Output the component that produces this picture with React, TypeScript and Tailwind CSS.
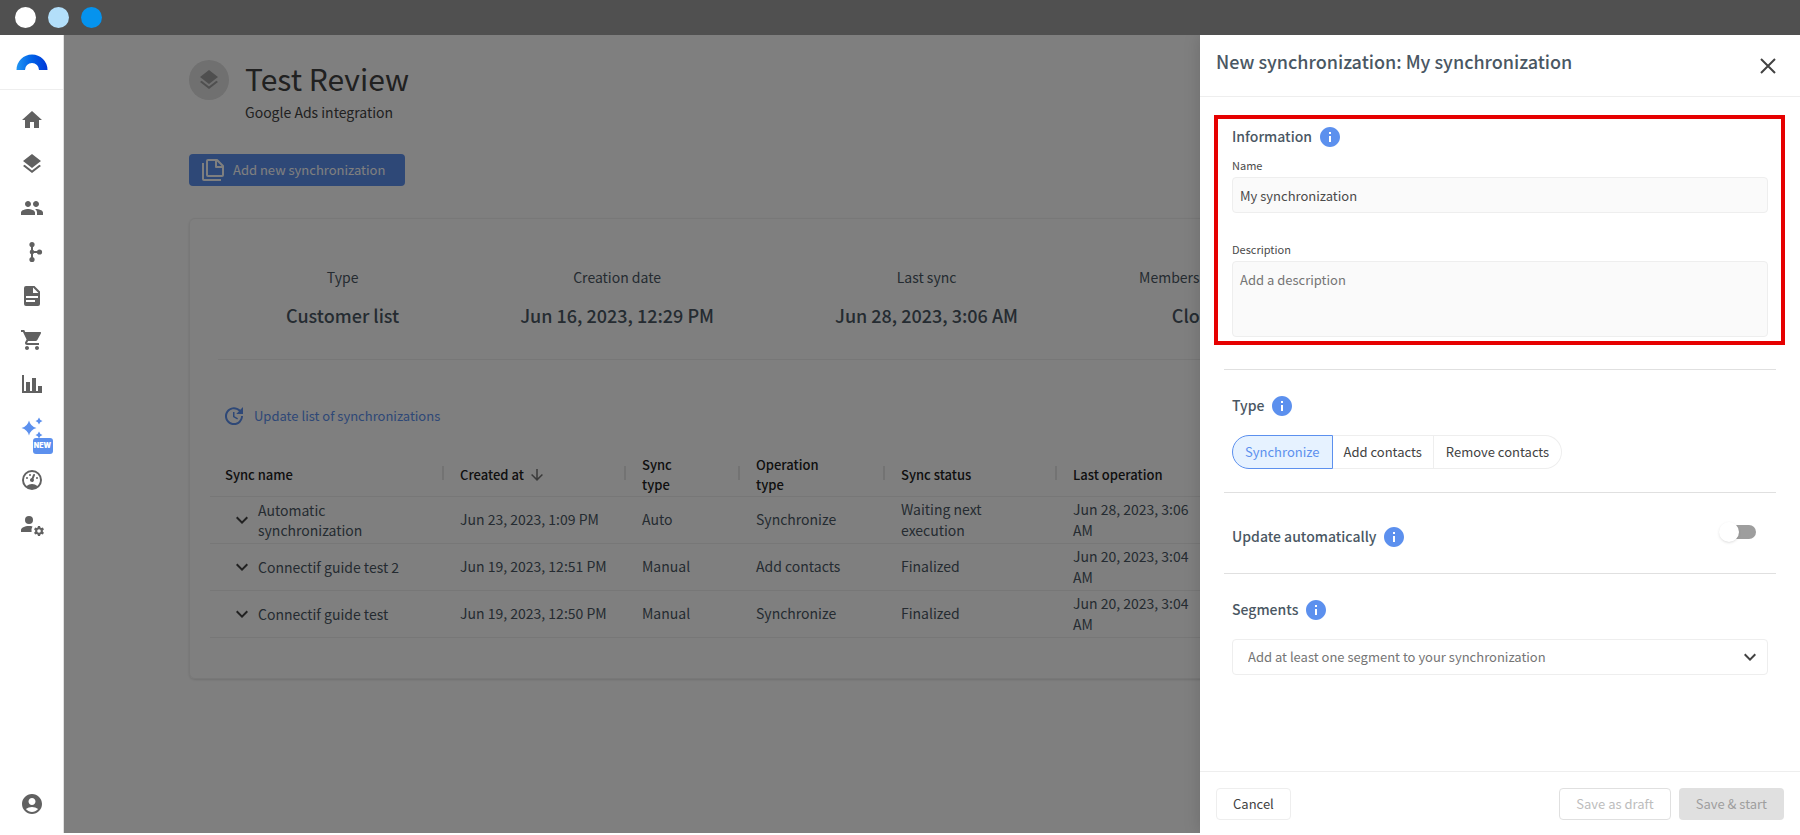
import React from "react";
import {
  MdAccountCircle,
  MdHome,
  MdInfo,
  MdLayers,
  MdPeople,
  MdShoppingCart,
  MdUpdate,
} from "react-icons/md";

type IconProps = { className?: string };

const BranchIcon = ({ className }: IconProps) => (
  <svg viewBox="0 0 24 24" className={className} fill="currentColor">
    <circle cx="12" cy="4.5" r="2.6" />
    <circle cx="12" cy="19.5" r="2.6" />
    <circle cx="19.5" cy="12" r="2.6" />
    <circle cx="12" cy="12" r="2.3" />
    <path d="M11 4h2v7h6v2h-6v7h-2z" />
  </svg>
);

const DocumentIcon = ({ className }: IconProps) => (
  <svg viewBox="0 0 24 24" className={className} fill="currentColor">
    <path
      fillRule="evenodd"
      d="M6 2h8.5L20 7.5V20a2 2 0 0 1-2 2H6a2 2 0 0 1-2-2V4a2 2 0 0 1 2-2zm7 1.5V9h5.5zM6 12v2h12v-2zm0 4v2h9v-2z"
    />
  </svg>
);

const ChartIcon = ({ className }: IconProps) => (
  <svg viewBox="0 0 24 24" className={className} fill="currentColor">
    <path d="M22 21H2V3h2v16h2v-9h4v9h2V6h4v13h2v-5h4z" />
  </svg>
);

const SparklesIcon = ({ className }: IconProps) => (
  <svg viewBox="0 0 24 24" className={className} fill="currentColor">
    <path d="M9 4.500q1.500 6 7.500 7.500q-6 1.500-7.500 7.500q-1.500-6-7.500-7.500q6-1.500 7.500-7.500z" />
    <path d="M19 1.500q.8 2.700 3.500 3.500q-2.700.8-3.500 3.500q-.8-2.700-3.500-3.500q2.700-.8 3.500-3.500z" />
    <path d="M19 15.500q.8 2.700 3.500 3.500q-2.700.8-3.500 3.500q-.8-2.700-3.500-3.500q2.700-.8 3.500-3.500z" />
  </svg>
);

const GaugeIcon = ({ className }: IconProps) => (
  <svg viewBox="0 0 24 24" className={className} fill="currentColor">
    <path d="M12 2A10 10 0 0 0 2 12A10 10 0 0 0 12 22A10 10 0 0 0 22 12A10 10 0 0 0 12 2M12 4A8 8 0 0 1 20 12C20 14.4 19 16.5 17.3 18C15.9 16.7 14 16 12 16C10 16 8.2 16.7 6.7 18C5 16.5 4 14.4 4 12A8 8 0 0 1 12 4M14 5.890C13.62 5.900 13.26 6.150 13.1 6.540L11.810 9.770L11.710 10C11 10.130 10.410 10.600 10.140 11.260C9.730 12.290 10.230 13.450 11.260 13.860C12.290 14.270 13.450 13.770 13.860 12.740C14.120 12.080 14 11.320 13.570 10.760L13.670 10.500L14.960 7.290C15.170 6.750 14.920 6.170 14.410 5.960C14.280 5.910 14.150 5.890 14 5.890M10 6A1 1 0 0 0 9 7A1 1 0 0 0 10 8A1 1 0 0 0 11 7A1 1 0 0 0 10 6M7 9A1 1 0 0 0 6 10A1 1 0 0 0 7 11A1 1 0 0 0 8 10A1 1 0 0 0 7 9M17 9A1 1 0 0 0 16 10A1 1 0 0 0 17 11A1 1 0 0 0 18 10A1 1 0 0 0 17 9Z" />
  </svg>
);

const AccountCogIcon = ({ className }: IconProps) => (
  <svg viewBox="0 0 24 24" className={className} fill="currentColor">
    <circle cx="9" cy="8" r="4" />
    <path d="M9 14c-4.420 0-8 1.790-8 4v2h10.600a7 7 0 0 1 .9-5.600C11.400 14.100 10.200 14 9 14z" />
    <path
      fillRule="evenodd"
      d="M18 14h2l.4 1.500 1 .6 1.500-.5 1 1.800-1.100 1.100v1.100l1.100 1.100-1 1.800-1.500-.5-1 .6-.4 1.400h-2l-.4-1.400-1-.6-1.500.5-1-1.800 1.100-1.100v-1.100l-1.100-1.100 1-1.800 1.500.5 1-.6zm1 3.200a1.800 1.800 0 1 0 0 3.600a1.800 1.800 0 1 0 0-3.600z"
    />
  </svg>
);

const CopyIcon = ({ className }: IconProps) => (
  <svg
    viewBox="0 0 24 24"
    className={className}
    fill="none"
    stroke="currentColor"
    strokeWidth="2"
    strokeLinejoin="round"
  >
    <path d="M7 2h9l6 6v9a1 1 0 0 1-1 1H7a1 1 0 0 1-1-1V3a1 1 0 0 1 1-1z" />
    <path d="M15 2v7h7" />
    <path d="M2 5v16a1 1 0 0 0 1 1h17" />
  </svg>
);

const ChevronIcon = ({ className }: IconProps) => (
  <svg viewBox="0 0 24 24" className={className} fill="currentColor">
    <path d="M7.410 8.580L12 13.170L16.590 8.580L18 10L12 16L6 10z" />
  </svg>
);

const ArrowDownIcon = ({ className }: IconProps) => (
  <svg viewBox="0 0 24 24" className={className} fill="currentColor">
    <path d="M11 4h2v12l5.500-5.500 1.420 1.420L12 19.840 4.080 11.920 5.500 10.500 11 16z" />
  </svg>
);

const CloseIcon = ({ className }: IconProps) => (
  <svg
    viewBox="0 0 24 24"
    className={className}
    fill="none"
    stroke="currentColor"
    strokeWidth="2"
  >
    <path d="M5 5l14 14M19 5L5 19" />
  </svg>
);

const Logo = () => (
  <svg viewBox="0 0 32 16" className="h-4 w-8">
    <defs>
      <linearGradient id="logo" x1="0" x2="1">
        <stop offset="0" stopColor="#2196f3" />
        <stop offset="0.5" stopColor="#0060e6" />
        <stop offset="1" stopColor="#0038d8" />
      </linearGradient>
    </defs>
    <path
      d="M.5 16a15.500 15.500 0 0 1 31 0h-8.500a7 7 0 0 0-14 0z"
      fill="url(#logo)"
    />
  </svg>
);

const navItems = [
  { label: "Home", icon: MdHome },
  { label: "Content", icon: MdLayers },
  { label: "Contacts", icon: MdPeople },
  { label: "Workflows", icon: BranchIcon },
  { label: "Documents", icon: DocumentIcon },
  { label: "Store", icon: MdShoppingCart },
  { label: "Reports", icon: ChartIcon },
];

const stats = [
  { label: "Type", value: "Customer list" },
  { label: "Creation date", value: "Jun 16, 2023, 12:29 PM" },
  { label: "Last sync", value: "Jun 28, 2023, 3:06 AM" },
  { label: "Membership status", value: "Closed" },
];

const columns = [
  "Sync name",
  "Created at",
  "Sync type",
  "Operation type",
  "Sync status",
  "Last operation",
];

const syncs = [
  {
    name: "Automatic synchronization",
    created: "Jun 23, 2023, 1:09 PM",
    type: "Auto",
    operation: "Synchronize",
    status: "Waiting next execution",
    last: "Jun 28, 2023, 3:06 AM",
  },
  {
    name: "Connectif guide test 2",
    created: "Jun 19, 2023, 12:51 PM",
    type: "Manual",
    operation: "Add contacts",
    status: "Finalized",
    last: "Jun 20, 2023, 3:04 AM",
  },
  {
    name: "Connectif guide test",
    created: "Jun 19, 2023, 12:50 PM",
    type: "Manual",
    operation: "Synchronize",
    status: "Finalized",
    last: "Jun 20, 2023, 3:04 AM",
  },
];

const Sidebar = () => (
  <nav className="flex w-16 shrink-0 flex-col items-center border-r border-[#e0e0e0] bg-white text-[#616161]">
    <a
      href="#"
      aria-label="Dashboard"
      className="flex h-[55px] w-full items-center justify-center border-b border-[#eeeeee]"
    >
      <Logo />
    </a>
    <div className="flex flex-col items-center gap-5 pt-[18px]">
      {navItems.map((item) => (
        <a key={item.label} href="#" aria-label={item.label}>
          <item.icon className="size-6" />
        </a>
      ))}
      <a href="#" aria-label="AI" className="relative text-[#5c90ee]">
        <SparklesIcon className="size-6" />
        <span className="absolute top-[22px] left-[13px] flex h-4 w-5 items-center justify-center rounded-[3px] bg-[#5c90ee] font-[Inter] text-[7px] font-black text-white">
          NEW
        </span>
      </a>
      <a href="#" aria-label="Performance" className="pt-2">
        <GaugeIcon className="size-6" />
      </a>
      <a href="#" aria-label="Account settings">
        <AccountCogIcon className="size-6" />
      </a>
    </div>
    <a href="#" aria-label="Profile" className="mt-auto pb-[17px]">
      <MdAccountCircle className="size-6" />
    </a>
  </nav>
);

const SyncTable = () => (
  <table className="w-full table-fixed border-collapse text-left">
    <colgroup>
      <col className="w-[235px]" />
      <col className="w-[182px]" />
      <col className="w-[114px]" />
      <col className="w-[145px]" />
      <col className="w-[172px]" />
      <col className="w-[160px]" />
      <col />
    </colgroup>
    <thead>
      <tr className="h-[47px] border-b border-[#eeeeee] text-[13px] leading-5 text-[#212121]">
        {columns.map((column) => (
          <th key={column} className="pt-[6px] pr-0 pb-0 pl-[15px] font-medium">
            <div className="flex items-center justify-between">
              <span className="flex items-center pr-10">
                {column}
                {column === "Created at" && (
                  <ArrowDownIcon className="ml-1 size-[18px] text-[#757575]" />
                )}
              </span>
              {column !== "Last operation" && (
                <span className="mr-px mb-1 h-[14px] w-[2px] shrink-0 bg-[#e6e6e6]" />
              )}
            </div>
          </th>
        ))}
        <td />
      </tr>
    </thead>
    <tbody className="text-[14px] leading-[21px] text-[#4a5763]">
      {syncs.map((sync) => (
        <tr key={sync.name} className="h-[47px] border-b border-[#eeeeee]">
          <td className="py-0 pr-6 pl-5">
            <div className="flex items-center gap-1 leading-5">
              <button aria-label="Expand row" className="text-[#424242]">
                <ChevronIcon className="size-6" />
              </button>
              <span>{sync.name}</span>
            </div>
          </td>
          <td className="p-0 pl-[15px]">{sync.created}</td>
          <td className="p-0 pl-[15px]">{sync.type}</td>
          <td className="p-0 pl-[15px]">{sync.operation}</td>
          <td className="px-[15px] py-0">{sync.status}</td>
          <td className="px-[15px] py-0">{sync.last}</td>
          <td />
        </tr>
      ))}
    </tbody>
  </table>
);

const Integration = () => (
  <div className="px-[125px] pt-[25px]">
    <div className="flex gap-4">
      <div className="flex size-10 shrink-0 items-center justify-center rounded-full bg-[#e0e0e0] text-[#9e9e9e]">
        <MdLayers className="size-6" />
      </div>
      <div className="text-[#424242]">
        <h1 className="text-[30px] leading-9">Test Review</h1>
        <p className="mt-[6px] text-[14px] leading-5">Google Ads integration</p>
      </div>
    </div>

    <button className="mt-8 flex h-8 items-center gap-2 rounded-[4px] bg-[#5c90ee] pr-5 pl-3 text-[13px] text-white">
      <CopyIcon className="size-6" />
      Add new synchronization
    </button>

    <section className="mt-8 rounded-[6px] border border-[#f0f0f0] px-5 pb-10 shadow-sm">
      <dl className="mx-2 flex gap-[121px] border-b border-[#eeeeee] px-[68px] pt-[46px] pb-[30px] text-center text-[#4a5763]">
        {stats.map((stat) => (
          <div key={stat.label} className="shrink-0">
            <dt className="text-[14px] leading-6">{stat.label}</dt>
            <dd className="mt-3 text-[18px] leading-7 font-medium">
              {stat.value}
            </dd>
          </div>
        ))}
      </dl>

      <button className="mt-11 mb-[21px] ml-3 flex h-6 items-center gap-2 text-[13px] text-[#5c90ee]">
        <MdUpdate className="size-6" />
        Update list of synchronizations
      </button>

      <SyncTable />
    </section>
  </div>
);

const SectionTitle = ({
  children,
  id,
}: {
  children: React.ReactNode;
  id?: string;
}) => (
  <h3
    id={id}
    className="flex items-center gap-[6px] text-[14px] leading-6 font-medium text-[#4a5763]"
  >
    <span className="pb-[2px]">{children}</span>
    <MdInfo className="size-6 text-[#5c90ee]" />
  </h3>
);

const SyncDrawer = () => (
  <aside className="absolute inset-y-0 right-0 flex w-1/3 flex-col bg-white shadow-[0_0_16px_rgba(0,0,0,0.15)]">
    <header className="flex h-[62px] items-center justify-between border-b border-[#eeeeee] px-4">
      <h2 className="pb-[10px] text-[18px] leading-7 font-medium text-[#4a5763]">
        New synchronization: My synchronization
      </h2>
      <button aria-label="Close" className="mr-1 text-[#424242]">
        <CloseIcon className="size-6" />
      </button>
    </header>

    <form className="flex-1 pt-[18px]">
      {/* Highlighted block with the basic data */}
      <div className="mr-[15px] ml-[14px] border-4 border-[#e60000] pt-[5px] pr-[13px] pb-1 pl-[14px] text-[#4a4a4a]">
        <SectionTitle>Information</SectionTitle>
        <label htmlFor="name" className="mt-[5px] block text-[11px] leading-5">
          Name
        </label>
        <input
          id="name"
          defaultValue="My synchronization"
          className="mt-[2px] block h-9 w-full rounded-[4px] border border-[#eeeeee] bg-[#fafafa] px-[7px] text-[13px]"
        />
        <label
          htmlFor="description"
          className="mt-[26px] block text-[11px] leading-5"
        >
          Description
        </label>
        <textarea
          id="description"
          placeholder="Add a description"
          className="mt-[2px] block h-[76px] w-full resize-none rounded-[4px] border border-[#eeeeee] bg-[#fafafa] px-[7px] py-2 text-[13px] leading-5 placeholder:text-[#757575]"
        />
      </div>

      <div className="mx-6 mt-6 border-t border-[#e0e0e0] px-2 py-[23px]">
        <SectionTitle>Type</SectionTitle>
        <div className="mt-4 flex h-[34px] text-[13px] text-[#424242]">
          <button
            type="button"
            aria-pressed="true"
            className="rounded-l-full border border-[#5c90ee] bg-[#e6f2ff] px-3 text-[#5c90ee]"
          >
            Synchronize
          </button>
          <button
            type="button"
            className="border-y border-r border-[#eeeeee] px-[11px]"
          >
            Add contacts
          </button>
          <button
            type="button"
            className="rounded-r-full border-y border-r border-[#eeeeee] px-3"
          >
            Remove contacts
          </button>
        </div>
      </div>

      <div className="mx-6 flex h-[81px] items-center justify-between border-t border-[#e0e0e0] pt-2 pr-5 pl-2">
        <SectionTitle id="auto-update">Update automatically</SectionTitle>
        <input
          type="checkbox"
          role="switch"
          aria-labelledby="auto-update"
          className="mb-[10px] flex h-[14px] w-9 appearance-none items-center rounded-full bg-[#9e9e9e] before:-ml-px before:size-5 before:rounded-full before:bg-white before:shadow-sm"
        />
      </div>

      <div className="mx-6 border-t border-[#e0e0e0] px-2 pt-[23px]">
        <SectionTitle id="segments">Segments</SectionTitle>
        <div className="mt-4 grid items-center">
          <select
            aria-labelledby="segments"
            className="col-start-1 row-start-1 h-9 w-full appearance-none rounded-[4px] border border-[#eeeeee] bg-white px-[15px] text-[13px] text-[#757575]"
          >
            <option>Add at least one segment to your synchronization</option>
          </select>
          <ChevronIcon className="pointer-events-none col-start-1 row-start-1 mr-[6px] size-6 justify-self-end text-[#424242]" />
        </div>
      </div>
    </form>

    <footer className="flex h-[62px] items-center gap-2 border-t border-[#eeeeee] px-4 pt-[2px] text-[13px]">
      <button className="mr-auto h-8 rounded-[4px] border border-[#eeeeee] px-4 text-[#424242]">
        Cancel
      </button>
      <button
        disabled
        className="h-8 rounded-[4px] border border-[#e0e0e0] px-4 text-[#bdbdbd]"
      >
        Save as draft
      </button>
      <button
        disabled
        className="h-8 rounded-[4px] bg-[#e0e0e0] px-[17px] text-[#9e9e9e]"
      >
        Save & start
      </button>
    </footer>
  </aside>
);

const App = () => {
  return (
    <div className="flex min-h-screen flex-col bg-white pb-[2px] font-['Noto_Sans_CJK_JP',sans-serif]">
      {/* Window bar */}
      <div className="flex h-[35px] shrink-0 items-center gap-3 bg-[#505050] px-[15px]">
        <span className="size-[21px] rounded-full bg-white" />
        <span className="size-[21px] rounded-full bg-[#b3dffa]" />
        <span className="size-[21px] rounded-full bg-[#0593ee]" />
      </div>

      <div className="relative flex flex-1 overflow-hidden">
        <Sidebar />
        <main className="min-w-0 flex-1 overflow-hidden">
          <Integration />
        </main>

        {/* Backdrop and drawer lie over the integration page */}
        <div className="absolute inset-y-0 right-0 left-16 bg-black/50" />
        <SyncDrawer />
      </div>
    </div>
  );
};

export default App;
